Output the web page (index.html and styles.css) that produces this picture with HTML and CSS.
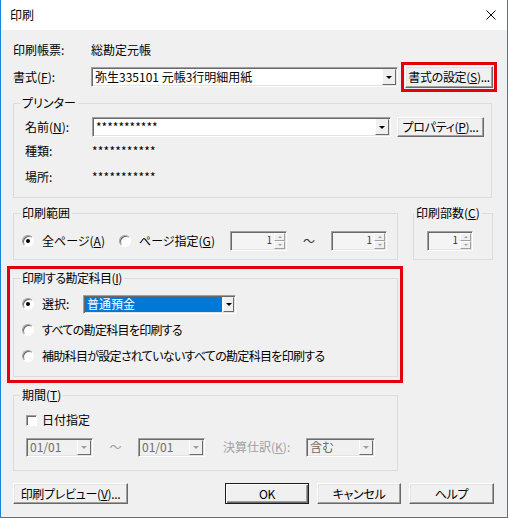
FILE: index.html
```html
<!DOCTYPE html>
<html lang="ja">
<head>
    <meta charset="UTF-8">
    <meta name="viewport" content="width=device-width, initial-scale=1.0">
    <title>印刷</title>
    <link rel="stylesheet" href="styles.css">
</head>
<body>

    <div class="dialog">
        <div class="titlebar">
            <span class="title">印刷</span>
            <svg class="close-icon" width="10" height="10" viewBox="0 0 10 10">
                <path d="M0.5 0.5 L9.5 9.5 M9.5 0.5 L0.5 9.5" stroke="#000" stroke-width="1" fill="none"/>
            </svg>
        </div>

        <div class="content">
            <div class="row row-ledger">
                <span class="label-col">印刷帳票:</span>
                <span>総勘定元帳</span>
            </div>

            <div class="row row-format">
                <span class="label-col">書式(<u>F</u>):</span>
                <div class="combo combo-format">
                    <span class="combo-text">弥生335101 元帳3行明細用紙</span>
                    <span class="combo-arrow"></span>
                </div>
                <button class="btn btn-format">書式の設定(<u>S</u>)...</button>
            </div>

            <fieldset class="group group-printer">
                <legend>プリンター</legend>
                <div class="group-body">
                    <div class="row row-name">
                        <span class="label-col2">名前(<u>N</u>):</span>
                        <div class="combo combo-printer">
                            <span class="combo-text">***********</span>
                            <span class="combo-arrow"></span>
                        </div>
                        <button class="btn btn-prop">プロパティ(<u>P</u>)...</button>
                    </div>
                    <div class="row row-info">
                        <span class="label-col2">種類:</span>
                        <span class="mask">***********</span>
                    </div>
                    <div class="row row-info">
                        <span class="label-col2">場所:</span>
                        <span class="mask">***********</span>
                    </div>
                </div>
            </fieldset>

            <div class="range-row">
                <fieldset class="group group-range">
                    <legend>印刷範囲</legend>
                    <div class="group-body">
                        <div class="row row-range">
                            <label class="radio-item radio-all"><span class="radio checked"></span><span>全ページ(<u>A</u>)</span></label>
                            <label class="radio-item radio-page"><span class="radio"></span><span>ページ指定(<u>G</u>)</span></label>
                            <div class="spin spin-from">
                                <span class="spin-value">1</span>
                                <span class="spin-btns"><i class="spin-up"></i><i class="spin-down"></i></span>
                            </div>
                            <span class="tilde">～</span>
                            <div class="spin spin-to">
                                <span class="spin-value">1</span>
                                <span class="spin-btns"><i class="spin-up"></i><i class="spin-down"></i></span>
                            </div>
                        </div>
                    </div>
                </fieldset>

                <fieldset class="group group-copies">
                    <legend>印刷部数(<u>C</u>)</legend>
                    <div class="group-body">
                        <div class="row row-range">
                            <div class="spin spin-copies">
                                <span class="spin-value">1</span>
                                <span class="spin-btns"><i class="spin-up"></i><i class="spin-down"></i></span>
                            </div>
                        </div>
                    </div>
                </fieldset>
            </div>

            <div class="red-frame">
                <fieldset class="group group-accounts">
                    <legend>印刷する勘定科目(<u>I</u>)</legend>
                    <div class="group-body">
                        <div class="row row-option">
                            <label class="radio-item radio-select"><span class="radio checked"></span><span>選択:</span></label>
                            <div class="combo combo-selected">
                                <span class="combo-text">普通預金</span>
                                <span class="combo-arrow"></span>
                            </div>
                        </div>
                        <div class="row row-option">
                            <label class="radio-item option-text"><span class="radio"></span><span>すべての勘定科目を印刷する</span></label>
                        </div>
                        <div class="row row-option">
                            <label class="radio-item option-text"><span class="radio"></span><span>補助科目が設定されていないすべての勘定科目を印刷する</span></label>
                        </div>
                    </div>
                </fieldset>
            </div>

            <fieldset class="group group-period">
                <legend>期間(<u>T</u>)</legend>
                <div class="group-body">
                    <div class="row row-check">
                        <label class="check-item"><span class="checkbox"></span><span>日付指定</span></label>
                    </div>
                    <div class="row row-dates">
                        <div class="combo combo-date disabled">
                            <span class="combo-text">01/01</span>
                            <span class="combo-arrow"></span>
                        </div>
                        <span class="tilde tilde-date">～</span>
                        <div class="combo combo-date disabled">
                            <span class="combo-text">01/01</span>
                            <span class="combo-arrow"></span>
                        </div>
                        <span class="label-closing">決算仕訳(<u>K</u>):</span>
                        <div class="combo combo-closing disabled">
                            <span class="combo-text">含む</span>
                            <span class="combo-arrow"></span>
                        </div>
                    </div>
                </div>
            </fieldset>

            <div class="footer">
                <button class="btn btn-preview">印刷プレビュー(<u>V</u>)...</button>
                <button class="btn btn-default btn-ok">OK</button>
                <button class="btn btn-cancel">キャンセル</button>
                <button class="btn btn-help">ヘルプ</button>
            </div>
        </div>
    </div>

</body>
</html>
```

FILE: styles.css
```css
* {
    box-sizing: border-box;
}
html, body {
    margin: 0;
    padding: 0;
}
body {
    font-family: "Noto Sans CJK JP", "Noto Sans", sans-serif;
    font-size: 12px;
    line-height: 14px;
    font-feature-settings: "palt";
    color: #000;
    background: #fff;
}
u {
    text-decoration: underline;
    text-underline-offset: 1px;
}
.dialog {
    width: 508px;
    height: 518px;
    background: #f0f0f0;
    border: 1px solid #1883d7;
    border-top: none;
}
.titlebar {
    height: 30px;
    background: #fff;
    display: flex;
    align-items: center;
    justify-content: space-between;
    padding: 0 11px 0 9px;
}
.content {
    padding: 10px 13px 0 12px;
}
.row {
    display: flex;
    align-items: center;
}
.row-ledger {
    height: 20px;
}
.row-format {
    height: 22px;
    margin-top: 6px;
}
.label-col {
    width: 78px;
}
.label-col2 {
    width: 67px;
}

/* buttons */
.btn {
    font: inherit;
    font-feature-settings: "palt";
    color: #000;
    background: #f0f0f0;
    border: 1px solid;
    border-color: #fff #696969 #696969 #fff;
    box-shadow: inset -1px -1px 0 #a0a0a0, inset 1px 1px 0 #e3e3e3;
    padding: 0;
    height: 21px;
    line-height: 14px;
    white-space: nowrap;
    letter-spacing: -0.3px;
    cursor: default;
}
.btn-default {
    border-color: #1e1e1e;
    box-shadow: inset 1px 1px 0 #fff, inset -1px -1px 0 #696969, inset -2px -2px 0 #a0a0a0;
}
.btn-format {
    width: 88px;
    height: 22px;
    margin-left: 7px;
    outline: 3px solid #e3000f;
    outline-offset: 1px;
}
.btn-prop {
    width: 87px;
    height: 20px;
    margin-left: 6px;
}

/* combo boxes */
.combo {
    display: flex;
    align-items: stretch;
    height: 20px;
    padding: 1px;
    background: #fff;
    border: 1px solid;
    border-color: #a0a0a0 #fff #fff #a0a0a0;
    box-shadow: inset 1px 1px 0 #696969, inset -1px -1px 0 #e3e3e3;
}
.combo-text {
    flex: 1;
    padding-left: 2px;
    display: flex;
    align-items: center;
    white-space: nowrap;
    overflow: hidden;
}
.combo-arrow {
    width: 14px;
    background: #f0f0f0;
    border: 1px solid;
    border-color: #f0f0f0 #696969 #696969 #fff;
    display: flex;
    align-items: center;
    justify-content: center;
}
.combo-arrow::after {
    content: "";
    border-left: 3px solid transparent;
    border-right: 3px solid transparent;
    border-top: 3px solid #000;
}
.combo-format {
    width: 307px;
}
.combo-printer {
    width: 299px;
}
.combo-selected {
    width: 153px;
    height: 19px;
}
.combo-selected .combo-text {
    background: #0078d7;
    color: #fff;
    margin-right: 1px;
}
.combo-selected .combo-arrow {
    width: 11px;
}
.combo.disabled {
    background: #f0f0f0;
}
.combo.disabled .combo-text {
    color: #6d6d6d;
}
.combo.disabled .combo-arrow::after {
    border-top-color: #a0a0a0;
}
.combo-date {
    width: 67px;
    height: 19px;
}
.combo-closing {
    width: 69px;
    height: 19px;
}
.combo-closing .combo-text {
    color: #222;
}

/* group boxes */
.group {
    margin: 0;
    padding: 0;
    min-width: 0;
    border: 1px solid #dcdcdc;
}
.group legend {
    padding: 0 2px;
    margin-left: 6px;
    line-height: 14px;
}
.group-printer {
    width: 479px;
    margin-top: 8px;
}
.group-printer .group-body {
    padding: 6px 0 7px 11px;
}
.row-name {
    height: 22px;
}
.row-info {
    height: 26px;
}
.mask {
    letter-spacing: 0.2px;
}

.range-row {
    display: flex;
    gap: 15px;
    margin-top: 8px;
}
.group-range {
    width: 385px;
}
.group-range .group-body {
    padding: 10px 0 7px 8px;
}
.group-copies {
    width: 80px;
}
.group-copies legend {
    margin-left: 0;
}
.group-copies .group-body {
    padding: 10px 0 7px 13px;
}
.row-range {
    height: 22px;
}

/* radio / check */
.radio-item,
.check-item {
    display: flex;
    align-items: center;
    gap: 8px;
    white-space: nowrap;
}
.option-text {
    letter-spacing: -0.7px;
}
.group-accounts legend {
    letter-spacing: -0.5px;
}
.radio {
    width: 12px;
    height: 12px;
    border-radius: 50%;
    background: #fff;
    border: 1px solid;
    border-color: #a0a0a0 #fff #fff #a0a0a0;
    box-shadow: inset 1px 1px 0 #696969;
    display: flex;
    align-items: center;
    justify-content: center;
    flex: none;
}
.radio.checked::after {
    content: "";
    width: 4px;
    height: 4px;
    border-radius: 50%;
    background: #000;
}
.radio-all {
    width: 97px;
}
.radio-page {
    width: 111px;
}
.radio-select {
    width: 61px;
}
.check-item {
    gap: 5px;
}
.checkbox {
    width: 11px;
    height: 11px;
    background: #fff;
    border: 1px solid;
    border-color: #a0a0a0 #fff #fff #a0a0a0;
    box-shadow: inset 1px 1px 0 #696969;
    flex: none;
}

/* spin boxes */
.spin {
    display: flex;
    align-items: stretch;
    height: 20px;
    padding: 1px;
    background: #f4f4f4;
    border: 1px solid;
    border-color: #a0a0a0 #fff #fff #a0a0a0;
    box-shadow: inset 1px 1px 0 #696969, inset -1px -1px 0 #e3e3e3;
}
.spin-from {
    width: 57px;
}
.spin-to {
    width: 56px;
}
.spin-copies {
    width: 46px;
}
.spin-value {
    flex: 1;
    text-align: right;
    padding-right: 2px;
    font-size: 10px;
    line-height: 14px;
    color: #333;
}
.spin-btns {
    width: 11px;
    display: flex;
    flex-direction: column;
}
.spin-btns i {
    flex: 1;
    background: #f0f0f0;
    border: 1px solid;
    border-color: #fff #a0a0a0 #a0a0a0 #fff;
    display: flex;
    align-items: center;
    justify-content: center;
}
.spin-up::after {
    content: "";
    border-left: 2px solid transparent;
    border-right: 2px solid transparent;
    border-bottom: 2px solid #a0a0a0;
}
.spin-down::after {
    content: "";
    border-left: 2px solid transparent;
    border-right: 2px solid transparent;
    border-top: 2px solid #a0a0a0;
}
.tilde {
    width: 44px;
    text-align: center;
    color: #333;
}

/* account selection highlighted frame */
.red-frame {
    width: 396px;
    margin: 6px 0 0 -6px;
    border: 3px solid #e3000f;
    padding: 2px 2px 3px 3px;
}
.group-accounts {
    width: 385px;
}
.group-accounts .group-body {
    padding: 6px 0 7px 8px;
}
.row-option {
    height: 26px;
}

/* period */
.group-period {
    width: 385px;
    margin-top: 5px;
}
.group-period .group-body {
    padding: 7px 0 12px 12px;
}
.row-check {
    height: 22px;
}
.row-dates {
    height: 22px;
    margin-top: 5px;
}
.tilde-date {
    width: 45px;
    color: #a0a0a0;
}
.label-closing {
    width: 83px;
    margin-left: 18px;
    color: #a0a0a0;
}

/* footer buttons */
.footer {
    display: flex;
    gap: 8px;
    margin-top: 12px;
}
.btn-preview {
    width: 115px;
}
.btn-ok {
    width: 84px;
    margin-left: auto;
}
.btn-cancel {
    width: 84px;
}
.btn-help {
    width: 85px;
}
```
